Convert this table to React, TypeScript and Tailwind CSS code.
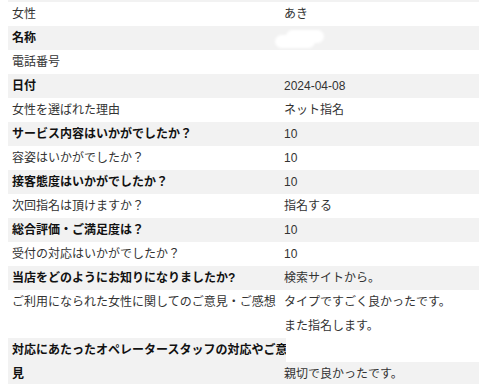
import React, { ReactElement } from 'react'

type Row = { label: string; value?: string; bold?: boolean }

const rows: Row[] = [
  { label: '女性', value: 'あき' },
  { label: '名称', value: '', bold: true },
  { label: '電話番号', value: '' },
  { label: '日付', value: '2024-04-08', bold: true },
  { label: '女性を選ばれた理由', value: 'ネット指名' },
  { label: 'サービス内容はいかがでしたか？', value: '10', bold: true },
  { label: '容姿はいかがでしたか？', value: '10' },
  { label: '接客態度はいかがでしたか？', value: '10', bold: true },
  { label: '次回指名は頂けますか？', value: '指名する' },
  { label: '総合評価・ご満足度は？', value: '10', bold: true },
  { label: '受付の対応はいかがでしたか？', value: '10' },
  { label: '当店をどのようにお知りになりましたか?', value: '検索サイトから。', bold: true },
]

const Blur: React.FC = (): ReactElement => (
  <svg className="absolute left-[-8px] top-[2px]" width="60" height="24" viewBox="0 0 60 24">
    <defs>
      <filter id="b" x="-20%" y="-40%" width="140%" height="180%">
        <feGaussianBlur stdDeviation="1.2" />
      </filter>
    </defs>
    <g fill="#fff" filter="url(#b)">
      <rect x="14" y="2" width="38" height="13" rx="6.5" />
      <rect x="3" y="7" width="40" height="13" rx="6.5" />
    </g>
  </svg>
)

const App: React.FC = (): ReactElement => (
  <div className="w-[480px] h-[384px] overflow-hidden bg-white text-[12px] leading-6 text-[#333] font-['Liberation_Sans','Noto_Sans_CJK_JP',sans-serif]">
    <div className="ml-2 w-[471px]">
      <div className="h-[2px] bg-[#f2f2f2]" />
      {rows.map((r, i) => (
        <div key={r.label} className={`grid grid-cols-[272px_1fr] h-6 ${i % 2 === 1 ? 'bg-[#f2f2f2]' : 'bg-white'}`}>
          <div className={`pl-1 whitespace-nowrap ${r.bold ? 'font-bold text-[#111]' : ''}`}>{r.label}</div>
          <div className="relative pl-1">
            {r.label === '名称' && <Blur />}
            {r.value}
          </div>
        </div>
      ))}
      <div className="grid grid-cols-[272px_1fr] bg-white">
        <div className="pl-1 whitespace-nowrap">ご利用になられた女性に関してのご意見・ご感想</div>
        <div className="pl-1">
          <div>タイプですごく良かったです。</div>
          <div>また指名します。</div>
        </div>
      </div>
      <div className="grid grid-cols-[278px_1fr] bg-[#f2f2f2]">
        <div className="pl-1 font-bold text-[#111]">
          <div className="whitespace-nowrap">対応にあたったオペレータースタッフの対応やご意</div>
          <div>見</div>
        </div>
        <div>
          <div className="h-6 bg-white" />
          <div className="-ml-[2px]">親切で良かったです。</div>
        </div>
      </div>
    </div>
  </div>
)

export default App
